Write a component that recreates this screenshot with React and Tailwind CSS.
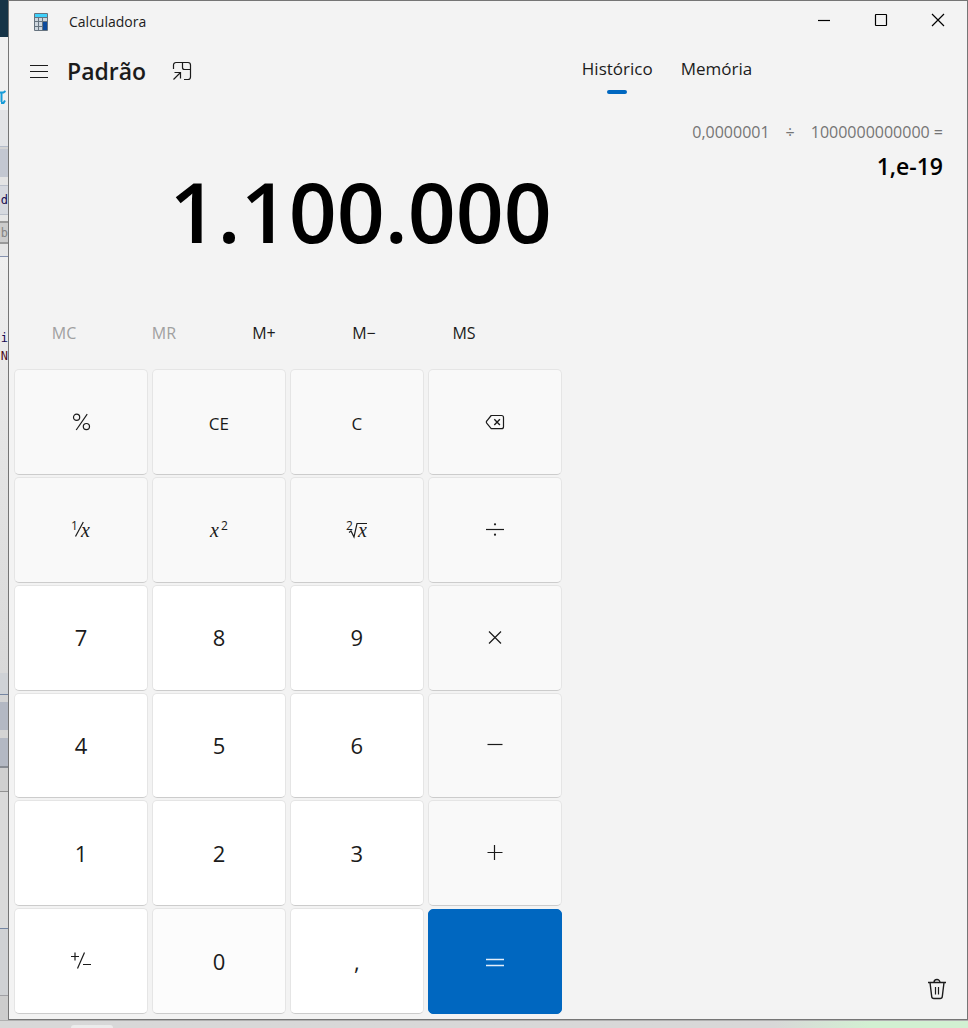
import React from "react";

function Glyph({ children, size = 24, className = "" }) {
  return (
    <svg
      width={size}
      height={size}
      viewBox={`0 0 ${size} ${size}`}
      fill="none"
      stroke="currentColor"
      strokeWidth="1.2"
      className={className}
      aria-hidden="true"
    >
      {children}
    </svg>
  );
}

const mathX = { fontFamily: '"Liberation Serif", serif', fontStyle: "italic", fontSize: 20 };
const small = { fontFamily: '"Open Sans", sans-serif', fontSize: 12 };

const icons = {
  percent: (
    <Glyph>
      <circle cx="7.6" cy="7.3" r="3.1" />
      <circle cx="17.4" cy="16.6" r="3.1" />
      <path d="M18.2 4.2 7.2 20" />
    </Glyph>
  ),
  backspace: (
    <Glyph>
      <path d="M8.2 5.5h10.3a2 2 0 0 1 2 2v9.2a2 2 0 0 1-2 2H8.2L3.9 13.4a1.8 1.8 0 0 1 0-2.6z" strokeLinejoin="round" />
      <path d="m11.3 9.3 5.6 5.6m0-5.6-5.6 5.6" strokeWidth="1.4" />
    </Glyph>
  ),
  reciprocal: (
    <Glyph>
      <g fill="currentColor" stroke="none">
        <text x="2" y="12" style={small}>1</text>
        <text x="12" y="19" style={mathX}>x</text>
      </g>
      <path d="M14.3 4 6.5 18.5" />
    </Glyph>
  ),
  square: (
    <Glyph>
      <g fill="currentColor" stroke="none">
        <text x="3" y="19" style={mathX}>x</text>
        <text x="14" y="12" style={small}>2</text>
      </g>
    </Glyph>
  ),
  root: (
    <Glyph>
      <g fill="currentColor" stroke="none">
        <text x="1" y="12" style={small}>2</text>
        <text x="13" y="19" style={mathX}>x</text>
      </g>
      <path d="M4 14.5 6 13l3 6L12 5.5h10" />
    </Glyph>
  ),
  divide: (
    <Glyph>
      <path d="M3 11.5h18" />
      <circle cx="12" cy="6.3" r="1.1" fill="currentColor" stroke="none" />
      <circle cx="12" cy="16.7" r="1.1" fill="currentColor" stroke="none" />
    </Glyph>
  ),
  times: (
    <Glyph>
      <path d="m6 5.5 12 12m0-12-12 12" />
    </Glyph>
  ),
  minus: (
    <Glyph>
      <path d="M4.5 11.5h15" />
    </Glyph>
  ),
  plus: (
    <Glyph>
      <path d="M4.5 11.5h15M11.5 4v15" />
    </Glyph>
  ),
  sign: (
    <Glyph>
      <path d="M2 7.5h8M6 3.5v8M15.5 3.5 8.5 19.5M14 15.5h8" />
    </Glyph>
  ),
  equals: (
    <Glyph>
      <path d="M3 9.5h18M3 15.5h18" strokeWidth="1.6" />
    </Glyph>
  ),
};

const keys = [
  { label: "Porcentagem", face: icons.percent, kind: "op" },
  { label: "Limpar entrada", face: "CE", kind: "clear" },
  { label: "Limpar", face: "C", kind: "clear" },
  { label: "Backspace", face: icons.backspace, kind: "op" },
  { label: "Inverso", face: icons.reciprocal, kind: "op" },
  { label: "Quadrado", face: icons.square, kind: "op" },
  { label: "Raiz quadrada", face: icons.root, kind: "op" },
  { label: "Dividir", face: icons.divide, kind: "op" },
  { label: "7", face: "7", kind: "digit" },
  { label: "8", face: "8", kind: "digit" },
  { label: "9", face: "9", kind: "digit" },
  { label: "Multiplicar", face: icons.times, kind: "op" },
  { label: "4", face: "4", kind: "digit" },
  { label: "5", face: "5", kind: "digit" },
  { label: "6", face: "6", kind: "digit" },
  { label: "Subtrair", face: icons.minus, kind: "op" },
  { label: "1", face: "1", kind: "digit" },
  { label: "2", face: "2", kind: "digit" },
  { label: "3", face: "3", kind: "digit" },
  { label: "Somar", face: icons.plus, kind: "op" },
  { label: "Trocar sinal", face: icons.sign, kind: "digit" },
  { label: "0", face: "0", kind: "hover" },
  { label: "Vírgula decimal", face: ",", kind: "digit" },
  { label: "Igual", face: icons.equals, kind: "equals" },
];

const keyStyles = {
  op: "bg-[#f9f9f9] border-[#e5e5e5] border-b-[#cccccc]",
  clear: "pt-[3px] bg-[#f9f9f9] text-[17px] border-[#e5e5e5] border-b-[#cccccc]",
  digit: "bg-white text-[22px] border-[#e5e5e5] border-b-[#cccccc]",
  hover: "bg-[#fcfcfc] text-[22px] border-[#e5e5e5] border-b-[#cccccc]",
  equals: "mt-px bg-[#0067c0] text-[#e3eefa] border-[#0067c0]",
};

function Key({ label, face, kind }) {
  return (
    <button
      type="button"
      aria-label={label}
      className={`flex items-center justify-center rounded-[5px] border ${keyStyles[kind]}`}
    >
      {face}
    </button>
  );
}

const memoryKeys = [
  { label: "MC", disabled: true },
  { label: "MR", disabled: true },
  { label: "M+" },
  { label: "M−" },
  { label: "MS" },
];

function AppIcon() {
  return (
    <svg width="16" height="20" viewBox="0 0 16 20" aria-hidden="true">
      <rect x="1" y="1" width="14" height="18" rx="1" fill="#66737f" />
      <rect x="2" y="2" width="12" height="3" fill="#3fd0fa" />
      <g fill="#cdd6de">
        <rect x="2" y="6" width="3" height="3" />
        <rect x="6" y="6" width="3" height="3" />
        <rect x="10" y="6" width="4" height="3" />
        <rect x="2" y="10" width="3" height="4" />
        <rect x="6" y="10" width="3" height="4" />
        <rect x="2" y="15" width="3" height="3" />
        <rect x="6" y="15" width="3" height="3" />
      </g>
      <rect x="10" y="10" width="4" height="8" fill="#0c4a9c" />
    </svg>
  );
}

function TitleBar() {
  return (
    <header className="flex h-10 items-center pr-px">
      <div className="flex flex-1 items-center gap-5 pt-[2px] pl-6">
        <AppIcon />
        <span className="text-[14px] leading-5">Calculadora</span>
      </div>
      <button type="button" aria-label="Minimizar" className="flex h-[38px] w-[57px] items-center justify-center self-start text-black">
        <Glyph size={14}><path d="M1 7.5h12" /></Glyph>
      </button>
      <button type="button" aria-label="Maximizar" className="flex h-[38px] w-[57px] items-center justify-center self-start text-black">
        <Glyph size={14}><rect x="1.5" y="1.5" width="11" height="11" rx="0.5" /></Glyph>
      </button>
      <button type="button" aria-label="Fechar" className="flex h-[38px] w-[57px] items-center justify-center self-start text-black">
        <Glyph size={14}><path d="m1 1 12 12m0-12L1 13" /></Glyph>
      </button>
    </header>
  );
}

function Calculator() {
  return (
    <main className="flex flex-col pr-[6px] pb-[5px] pl-[5px]">
      <div className="flex h-[60px] items-center">
        <button type="button" aria-label="Abrir navegação" className="flex w-[50px] justify-center">
          <Glyph size={20}><path d="M1 4.5h18M1 10.5h18M1 16.5h18" /></Glyph>
        </button>
        <h1 className="pl-[3px] text-[23px] leading-8 font-semibold">Padrão</h1>
        <button type="button" aria-label="Manter visível" className="ml-[26px] flex">
          <Glyph size={20}>
            <path d="M1.500 8V4a2.500 2.500 0 0 1 2.500-2.500h12A2.500 2.500 0 0 1 18.500 4v12a2.500 2.500 0 0 1-2.500 2.500h-4" />
            <path d="M10.500 1.500v5a2 2 0 0 0 2 2h6" />
            <path d="M1.500 18.500 8.500 11.500M2.500 11.500h6v6" />
          </Glyph>
        </button>
      </div>
      <output className="flex h-[212px] items-start justify-end pt-[50px] pr-[10px] text-[84px] leading-[120px] font-semibold text-black">
        1.100.000
      </output>
      <div className="flex h-[40px] items-center text-[16px]">
        {memoryKeys.map((k) => (
          <button
            key={k.label}
            type="button"
            disabled={k.disabled}
            className="h-9 w-[100px] disabled:text-[#a0a0a0]"
          >
            {k.label}
          </button>
        ))}
      </div>
      <div className="mt-4 grid flex-1 auto-rows-fr grid-cols-4 gap-x-1 gap-y-[2px]">
        {keys.map((k) => (
          <Key key={k.label} {...k} />
        ))}
      </div>
    </main>
  );
}

function HistoryPanel() {
  return (
    <aside className="flex flex-col">
      <div role="tablist" className="flex h-[60px] items-start pt-4 text-[17px] leading-6">
        <button type="button" role="tab" aria-selected="true" className="flex flex-col items-center gap-[9px] px-[14px]">
          Histórico
          <span className="h-1 w-5 rounded-full bg-[#0067c0]" />
        </button>
        <button type="button" role="tab" aria-selected="false" className="px-[14px]">
          Memória
        </button>
      </div>
      <ul className="flex-1 pt-[19px] pr-6 text-right">
        <li>
          <p className="flex justify-end gap-4 text-[16px] leading-6 text-[#757575]">
            <span>0,0000001</span>
            <span>÷</span>
            <span>1000000000000 =</span>
          </p>
          <p className="pt-[6px] text-[23px] leading-8 font-semibold text-black">1,e-19</p>
        </li>
      </ul>
      <div className="flex justify-end pr-[19px] pb-[19px]">
        <button type="button" aria-label="Limpar todo o histórico" className="flex">
          <Glyph size={22}>
            <path d="M2 4.500h18M8 4.500a3 3 0 0 1 6 0M4 4.500l1.700 14a2.200 2.200 0 0 0 2.200 2h6.200a2.200 2.200 0 0 0 2.200-2L18 4.500" strokeWidth="1.4" />
            <path d="M9.500 9v7.500M12.500 9v7.500" />
          </Glyph>
        </button>
      </div>
    </aside>
  );
}

function WindowBehind() {
  return (
    <div aria-hidden="true" className="flex w-2 flex-col overflow-hidden bg-[#d4d4d4] font-['DejaVu_Sans_Mono',monospace]">
      <div className="h-[37px] bg-[#163447]" />
      <div className="flex h-[73px] items-end bg-[#f0f0f0] pb-1">
        <svg width="8" height="18" viewBox="0 0 8 18" fill="none" stroke="#169bd7" strokeWidth="2">
          <path d="M0 4.500h3.500L5.500 3M1 15h2.500L5 12.500M1.500 5v9" />
        </svg>
      </div>
      <div className="h-[37px] border-b border-[#b4bccb] bg-[#e3e4e7]" />
      <div className="mt-[2px] h-7 bg-[#c3c7d1]" />
      <div className="h-2 bg-[#e4e4e4]" />
      <div className="flex h-[30px] items-center justify-end border-y border-[#b9bfca] bg-[#d6d9df] text-[12px] text-[#160a50]">d</div>
      <div className="h-[6px] bg-[#e6e6e6]" />
      <div className="flex h-[23px] items-center justify-end border-y-2 border-[#999999] bg-[#cccccc] text-[12px] text-[#858585]">b</div>
      <div className="h-3 bg-[#e6e6e6]" />
      <div className="flex h-[417px] flex-col border-t border-[#8592b0] bg-linear-to-b from-[#efefef] to-[#d9d9d9] pt-[72px] text-[12px] leading-[18px] text-[#160a50]">
        <span className="flex justify-end">i</span>
        <span className="flex justify-end text-[#4d0a20]">N</span>
      </div>
      <div className="h-[22px] border-b border-[#7485a2] bg-[#cfd2d6]" />
      <div className="mt-[7px] h-7 bg-[#b3b8c3]" />
      <div className="mt-2 h-[30px] border-b-2 border-[#878b92] bg-[#b3b8c3]" />
      <div className="h-6 border-b border-[#929292] bg-[#cfcfcf]" />
      <div className="h-[137px] border-b border-[#7485a2] bg-[#dadada]" />
      <div className="h-[67px] border-b border-[#a0a0a5] bg-[#cfd1d4]" />
      <div className="flex-1 bg-[#cdcdcd]" />
    </div>
  );
}

export default function App() {
  return (
    <div className="flex min-h-screen flex-col font-['Open_Sans','Noto_Sans',sans-serif] text-[#1b1b1b]">
      <div className="flex flex-1">
        <WindowBehind />
        <section className="flex flex-1 flex-col border border-[#757575] bg-[#f3f3f3]">
          <TitleBar />
          <div className="grid flex-1 grid-cols-[7fr_5fr]">
            <Calculator />
            <HistoryPanel />
          </div>
        </section>
      </div>
      <div className="flex h-2 items-end border-t border-[#b0b0b0] bg-linear-to-r from-[#d8d8d8] from-80% to-[#d2f0d2] to-90% pl-[71px]">
        <span className="h-[3px] w-[42px] rounded-t-[3px] bg-[#ececec]" />
      </div>
    </div>
  );
}
